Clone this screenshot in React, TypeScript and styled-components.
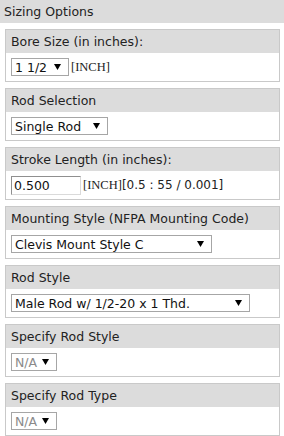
import React from "react";
import styled, { createGlobalStyle } from "styled-components";

const Global = createGlobalStyle`
  html, body { margin: 0; padding: 0; background: #fff; }
  body { font-family: "DejaVu Sans", Verdana, sans-serif; font-size: 13px; color: #222; }
`;

const Page = styled.div`
  width: 284px;
  height: 436px;
  overflow: hidden;
  background: #fff;
`;

const TitleBar = styled.div`
  height: 23px;
  background: #dcdcdc;
  padding-left: 4px;
  display: flex;
  align-items: center;
  font-size: 12.5px;
  color: #222;
`;

const List = styled.div`
  display: flex;
  flex-direction: column;
  gap: 6px;
  padding: 6px 5px 0 5px;
`;

const Card = styled.div`
  border: 1px solid #c9c9c9;
  width: 273px;
  background: #fff;
`;

const CardHeader = styled.div`
  height: 23px;
  background: #dcdcdc;
  padding-left: 5px;
  display: flex;
  align-items: center;
  font-size: 12.5px;
  color: #222;
`;

const CardBody = styled.div`
  height: 28px;
  padding-left: 5px;
  display: flex;
  align-items: center;
`;

const SelectBox = styled.div<{ $w: number; $disabled?: boolean }>`
  box-sizing: border-box;
  width: ${(p) => p.$w}px;
  height: 18px;
  border: 1px solid #a6a6a6;
  background: #fff;
  display: flex;
  align-items: center;
  justify-content: space-between;
  padding: 0 7px 0 3px;
  font-size: 12.5px;
  color: ${(p) => (p.$disabled ? "#8a8a8a" : "#111")};
  white-space: nowrap;
`;

const Arrow = styled.svg`
  width: 7px;
  height: 6px;
  flex: none;
`;

const TextInput = styled.div`
  box-sizing: border-box;
  width: 70px;
  height: 19px;
  border-style: solid;
  border-width: 1px;
  border-color: #8f8f8f #dadada #dadada #8f8f8f;
  background: #fff;
  display: flex;
  align-items: center;
  padding-left: 2px;
  font-size: 12.5px;
  color: #111;
`;

const Unit = styled.span`
  font-family: "Liberation Serif", "Times New Roman", serif;
  font-size: 12.5px;
  color: #222;
  margin-left: 2px;
`;

const Range = styled.span`
  font-size: 12px;
  color: #222;
`;

const Caret = () => (
  <Arrow viewBox="0 0 7 6">
    <polygon points="0,0 7,0 3.5,6" fill="#000" />
  </Arrow>
);

const Select = ({ w, value, disabled }: { w: number; value: string; disabled?: boolean }) => (
  <SelectBox $w={w} $disabled={disabled}>
    <span>{value}</span>
    <Caret />
  </SelectBox>
);

export default function App() {
  return (
    <Page>
      <Global />
      <TitleBar>Sizing Options</TitleBar>
      <List>
        <Card>
          <CardHeader>Bore Size (in inches):</CardHeader>
          <CardBody>
            <Select w={58} value="1 1/2" />
            <Unit>[INCH]</Unit>
          </CardBody>
        </Card>
        <Card>
          <CardHeader>Rod Selection</CardHeader>
          <CardBody>
            <Select w={97} value="Single Rod" />
          </CardBody>
        </Card>
        <Card>
          <CardHeader>Stroke Length (in inches):</CardHeader>
          <CardBody>
            <TextInput>0.500</TextInput>
            <Unit>[INCH]</Unit>
            <Range>[0.5 : 55 / 0.001]</Range>
          </CardBody>
        </Card>
        <Card>
          <CardHeader>Mounting Style (NFPA Mounting Code)</CardHeader>
          <CardBody>
            <Select w={201} value="Clevis Mount Style C" />
          </CardBody>
        </Card>
        <Card>
          <CardHeader>Rod Style</CardHeader>
          <CardBody>
            <Select w={239} value="Male Rod w/ 1/2-20 x 1 Thd." />
          </CardBody>
        </Card>
        <Card>
          <CardHeader>Specify Rod Style</CardHeader>
          <CardBody>
            <Select w={46} value="N/A" disabled />
          </CardBody>
        </Card>
        <Card>
          <CardHeader>Specify Rod Type</CardHeader>
          <CardBody>
            <Select w={46} value="N/A" disabled />
          </CardBody>
        </Card>
      </List>
    </Page>
  );
}
